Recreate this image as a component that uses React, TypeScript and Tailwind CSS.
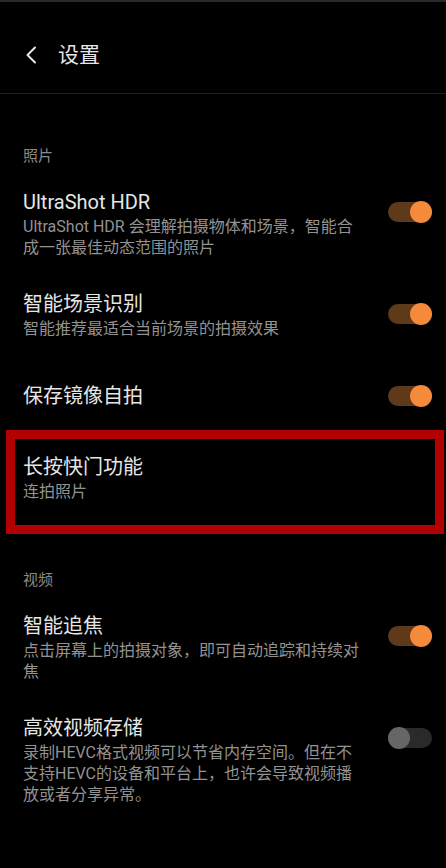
import React from 'react';

const font = { fontFamily: 'Roboto, "Noto Sans CJK SC", sans-serif' };

const Toggle = ({ on }: { on: boolean }) => (
  <div className={`relative w-[44px] h-[22px] shrink-0 flex items-center`}>
    <div className={`w-[44px] h-[20px] rounded-full ${on ? 'bg-[#5e3a1b]' : 'bg-[#2a2a2a]'}`} />
    <div
      className={`absolute top-0 w-[22px] h-[22px] rounded-full ${on ? 'right-0 bg-[#f58a3a]' : 'left-0 bg-[#666666]'}`}
    />
  </div>
);

type RowProps = { title: string; desc?: string; on?: boolean; highlight?: boolean };

const Row = ({ title, desc, on, highlight }: RowProps) => (
  <div
    className={`relative flex pl-[23px] pr-[14px] ${desc ? 'items-start py-4' : 'items-center min-h-[82px]'}`}
  >
    <div className="flex-1 pr-[23px]">
      <div className="text-[20px] leading-[28px] text-[#e6e6e6]">{title}</div>
      {desc && <div className="text-[16px] leading-[21px] text-[#929292]">{desc}</div>}
    </div>
    {on !== undefined && (
      <div className={desc ? 'mt-[13px]' : ''}>
        <Toggle on={on} />
      </div>
    )}
    {highlight && (
      <span className="absolute left-[6px] right-[2px] -top-[7px] -bottom-[16px] border-[9px] border-[#b30000] pointer-events-none" />
    )}
  </div>
);

const Section = ({ label }: { label: string }) => (
  <div className="pl-[23px] pt-[52px] pb-[6px] text-[15px] leading-[20px] text-[#8a8a8a]">{label}</div>
);

export default function App() {
  return (
    <div className="min-h-screen w-full bg-black" style={font}>
      <div className="h-[2px] bg-[#2a2a2a]" />
      <div className="h-[92px] pt-[14px] flex items-center border-b border-[#1e1e1e]">
        <svg className="ml-[25px]" width="12" height="18" viewBox="0 0 12 18" fill="none">
          <polyline points="10,1.5 2.5,9 10,16.5" stroke="#e6e6e6" strokeWidth="2" strokeLinecap="round" strokeLinejoin="round" />
        </svg>
        <div className="ml-[21px] text-[21px] leading-[28px] text-[#e6e6e6]">设置</div>
      </div>

      <Section label="照片" />
      <Row title="UltraShot HDR" desc="UltraShot HDR 会理解拍摄物体和场景，智能合成一张最佳动态范围的照片" on />
      <Row title="智能场景识别" desc="智能推荐最适合当前场景的拍摄效果" on />
      <Row title="保存镜像自拍" on />
      <Row title="长按快门功能" desc="连拍照片" highlight />

      <Section label="视频" />
      <Row title="智能追焦" desc="点击屏幕上的拍摄对象，即可自动追踪和持续对焦" on />
      <Row title="高效视频存储" desc="录制HEVC格式视频可以节省内存空间。但在不支持HEVC的设备和平台上，也许会导致视频播放或者分享异常。" on={false} />
    </div>
  );
}
